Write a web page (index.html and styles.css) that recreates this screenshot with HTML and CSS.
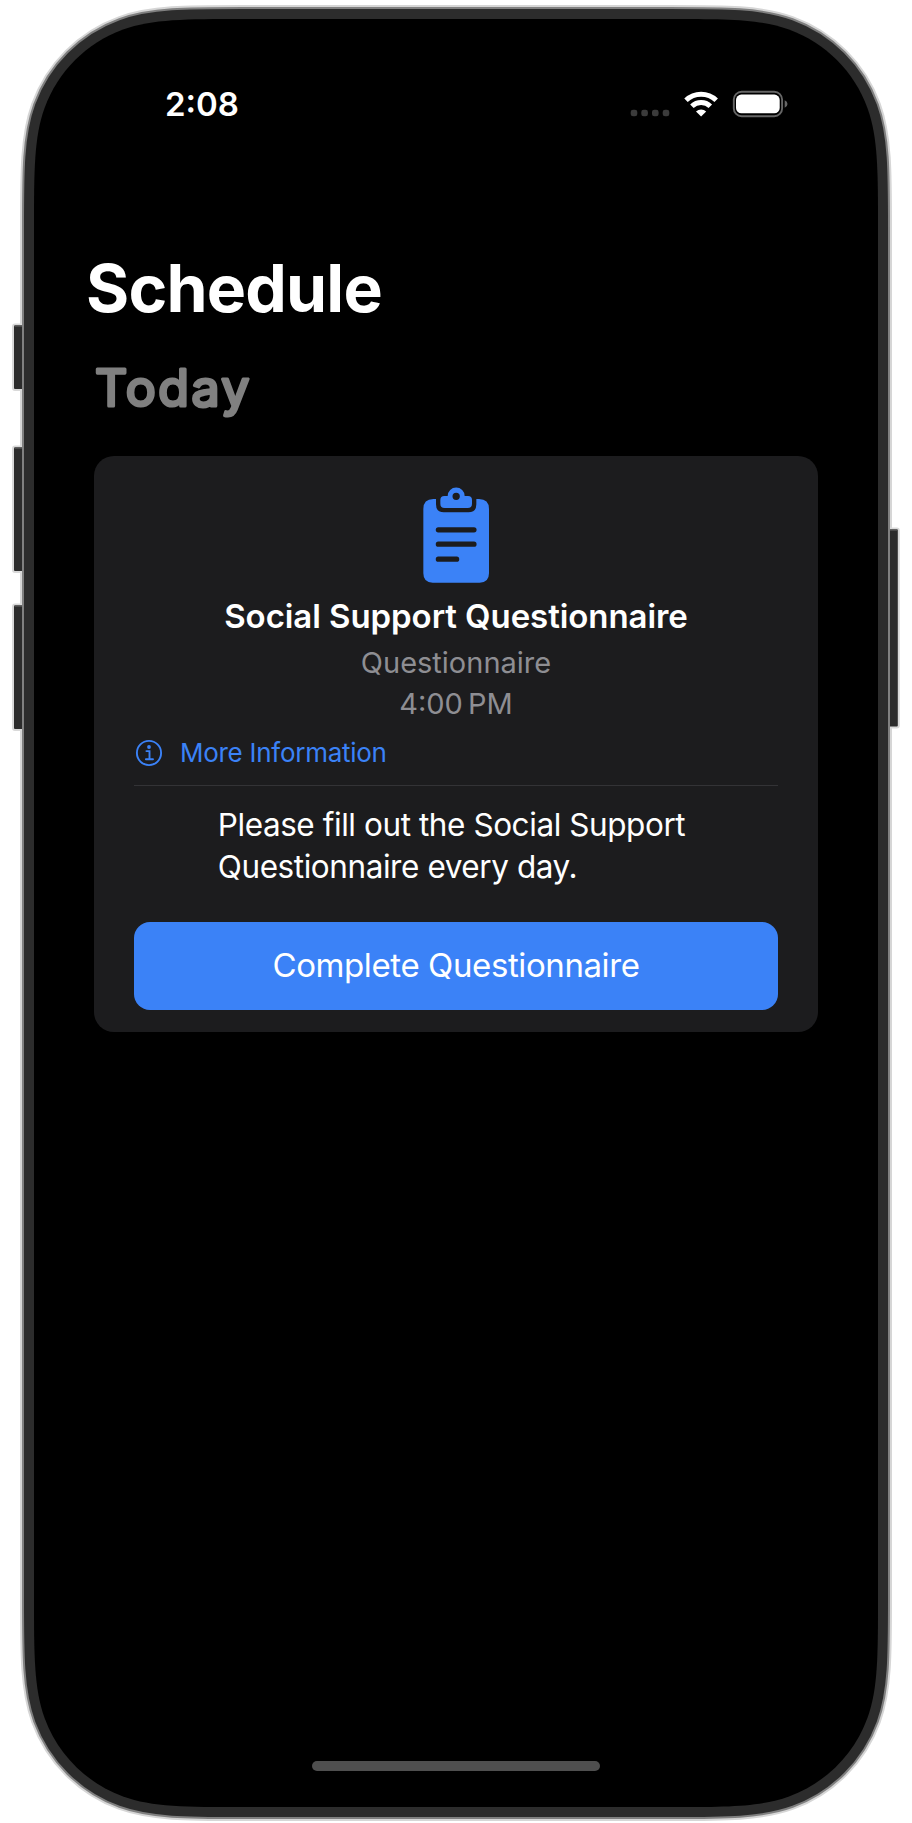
FILE: index.html
```html
<!DOCTYPE html>
<html lang="en">
<head>
<meta charset="utf-8">
<title>Schedule</title>
<link rel="stylesheet" href="styles.css">
</head>
<body>
<main class="device">
  <svg class="frame" viewBox="0 0 912 1823" aria-hidden="true">
    <path class="edge edge-light" d=""/>
    <g class="keys">
      <rect x="13" y="324.500" width="14" height="65.500" rx="2"/>
      <rect x="13" y="446.500" width="14" height="125.500" rx="2"/>
      <rect x="13" y="604.500" width="14" height="125.500" rx="2"/>
      <rect x="885" y="528.500" width="13.800" height="199" rx="2"/>
    </g>
    <g class="keytops">
      <path d="M14.500 326H22M14.500 448H22M14.500 606H22M890 530H897.500"/>
    </g>
    <path class="edge edge-mid" d=""/>
    <path class="edge edge-dark" d=""/>
  </svg>
  <div class="screen">
    <header class="status">
      <span class="clock">2:08</span>
      <svg class="indicators" width="164" height="30" viewBox="626 89 164 30" aria-hidden="true">
        <g fill="#3b3b3b">
          <rect x="630.700" y="109.700" width="6.600" height="6.600" rx="2.400"/>
          <rect x="641.300" y="109.700" width="6.600" height="6.600" rx="2.400"/>
          <rect x="652" y="109.700" width="6.600" height="6.600" rx="2.400"/>
          <rect x="662.700" y="109.700" width="6.600" height="6.600" rx="2.400"/>
        </g>
        <g fill="none" stroke="#fff" stroke-width="5">
          <path d="M686 100.300A21.800 21.800 0 0 1 716.200 100.300"/>
          <path d="M691.900 106.200A13.300 13.300 0 0 1 710.300 106.200"/>
        </g>
        <path fill="#fff" d="M701.100 116.600L696 111.400A7.500 7.500 0 0 1 706.200 111.400Z"/>
        <rect x="733.800" y="91.800" width="48.300" height="24.400" rx="7.800" fill="none" stroke="#666" stroke-width="1.900"/>
        <rect x="736" y="94.600" width="43.700" height="18.700" rx="5.400" fill="#fff"/>
        <path fill="#666" d="M784.700 100.200Q787.500 101.300 787.500 104T784.700 107.800Z"/>
      </svg>
    </header>
    <h1 class="title">Schedule</h1>
    <svg class="day" width="240" height="90" viewBox="90 350 240 90">
      <text class="day-text" x="95" y="406">Today</text>
    </svg>
    <section class="card">
      <svg class="clipboard" width="68" height="97" viewBox="66 50 204 291" aria-hidden="true">
        <path fill="#3b82f7" d="M108 86V102Q108 126 132 126H205Q229 126 229 102V86H237Q267 86 267 116V309Q267 337 239 337H98Q70 337 70 309V116Q70 86 100 86Z"/>
        <path fill="#3b82f7" fill-rule="evenodd" d="M143 77A25.500 25.500 0 0 1 194 77H204Q216 77 216 89V100Q216 113 203 113H134Q121 113 121 100V89Q121 77 133 77ZM168.500 67A11 11 0 1 0 168.500 89A11 11 0 1 0 168.500 67Z"/>
        <path class="rules" d="M115 178.500H222M115 221.500H222M115 266.500H170"/>
      </svg>
      <h2 class="name">Social Support Questionnaire</h2>
      <p class="kind">Questionnaire</p>
      <p class="kind due">4:00&#8201;PM</p>
      <a class="more">
        <svg width="28" height="28" viewBox="0 0 28 28" aria-hidden="true">
          <g fill="none" stroke="#3b82f7" stroke-width="1.900">
            <circle cx="14" cy="14" r="12.100"/>
            <path d="M11.400 12.100H14.500V20M10.900 20.200H18" stroke-linecap="round"/>
          </g>
          <circle cx="14" cy="8" r="1.900" fill="#3b82f7"/>
        </svg>
        <span>More Information</span>
      </a>
      <hr class="divider">
      <p class="note">Please fill out the Social Support<br>Questionnaire every day.</p>
      <button class="action">Complete Questionnaire</button>
    </section>
    <div class="home"></div>
  </div>
</main>
<script src="frame.js"></script>
</body>
</html>
```
FILE: styles.css
```css
* { box-sizing: border-box; }
body { margin: 0; background: #fff; font-family: Inter, "Liberation Sans", sans-serif; color: #fff; }
h1, h2, p { margin: 0; }
.device { position: relative; width: 912px; height: 1823px; overflow: hidden; }
.frame { position: absolute; inset: 0; width: 912px; height: 1823px; }
.keys rect { fill: #2c2c2c; stroke: #d9d9d9; stroke-width: 2; }
.keytops path { stroke: #555; stroke-width: 1.5; fill: none; }
.edge { fill: #000; paint-order: stroke; }
.edge-light { stroke: #d6d6d6; stroke-width: 28; }
.edge-mid { stroke: #808080; stroke-width: 24; }
.edge-dark { stroke: #2c2c2c; stroke-width: 20; }
.screen { position: relative; display: flex; flex-direction: column; height: 1823px; padding: 84px 94px 52px; }
.status { display: flex; justify-content: space-between; height: 40px; padding: 0 28px 0 71px; }
.clock { font-size: 33px; font-weight: 600; line-height: 40px; }
.indicators { margin-top: 5px; }
.title { margin: 124px 0 0 -8px; font-size: 66px; line-height: 80px; font-weight: 700; letter-spacing: -0.8px; }
.day { display: block; margin: 22px 0 0 -4px; }
.day-text { font-size: 50px; font-weight: 400; letter-spacing: 2.5px; fill: #808080; stroke: #808080; stroke-width: 3.2px; stroke-linejoin: round; }
.card { display: flex; flex-direction: column; align-items: center; height: 576px; margin-top: 16px; padding: 31px 40px 22px; border-radius: 20px; background: #1c1c1e; }
.clipboard { flex: none; }
.rules { fill: none; stroke: #1c1c1e; stroke-width: 15.5; stroke-linecap: round; }
.name { margin-top: 12px; font-size: 33px; line-height: 40px; font-weight: 600; letter-spacing: -0.07px; white-space: nowrap; }
.kind { margin-top: 7px; font-size: 29px; line-height: 40px; color: #8e8e93; }
.due { margin-top: 1px; }
.more { display: flex; align-self: stretch; gap: 17px; margin-top: 13px; padding-left: 1px; font-size: 26px; line-height: 32px; letter-spacing: -0.27px; color: #3b82f7; }
.more svg { margin-top: 2px; }
.divider { align-self: stretch; height: 1px; margin: 16px 0 0; border: 0; background: #333336; }
.note { margin: 18px 9px 0 0; font-size: 31.5px; line-height: 42px; letter-spacing: -0.43px; white-space: nowrap; }
.action { align-self: stretch; height: 88px; margin-top: auto; padding: 0 0 2px; border: 0; border-radius: 16px; background: #3b82f7; color: #fff; font: 400 33px/40px Inter, "Liberation Sans", sans-serif; letter-spacing: -0.4px; }
.home { width: 288px; height: 10px; margin: auto auto 0; border-radius: 5px; background: #4f4f4f; }
```
FILE: frame.js
```js
// Continuous-curvature rounded rectangle for the device body.
function smoothRect(x, y, w, h, r) {
  const corner = (cx, cy, ax, ay, bx, by) => {
    const p = (s, t) => `${cx + (ax * s + bx * t) * r} ${cy + (ay * s + by * t) * r}`;
    return `L${p(1.48, 0)}C${p(1.08, 0)} ${p(0.8372, 0)} ${p(0.6315, 0.0749)}` +
      `C${p(0.3728, 0.1691)} ${p(0.1691, 0.3728)} ${p(0.0749, 0.6315)}` +
      `C${p(0, 0.8372)} ${p(0, 1.08)} ${p(0, 1.48)}`;
  };
  return 'M' + (x + w / 2) + ' ' + y +
    corner(x + w, y, -1, 0, 0, 1) + corner(x + w, y + h, 0, -1, -1, 0) +
    corner(x, y + h, 1, 0, 0, -1) + corner(x, y, 0, 1, 1, 0) + 'Z';
}
const outline = smoothRect(34, 19, 844, 1788, 141);
document.querySelectorAll('.edge').forEach(path => path.setAttribute('d', outline));
```
